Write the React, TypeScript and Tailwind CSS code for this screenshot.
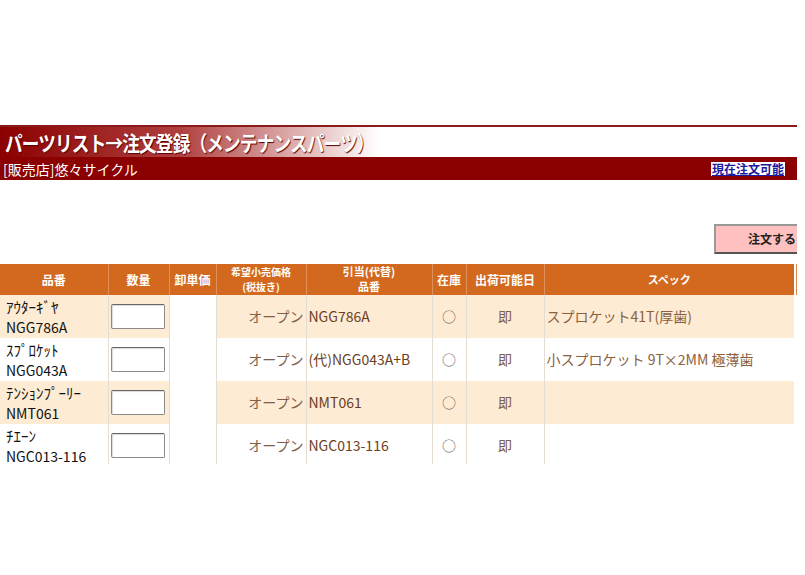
const font = "font-['Noto_Sans_CJK_JP','Noto_Sans',sans-serif]"

type Row = {
  name: string
  code: string
  price: string
  alloc: string
  stock: string
  ship: string
  spec: string
}

const rows: Row[] = [
  { name: "ｱｳﾀｰｷﾞﾔ", code: "NGG786A", price: "オープン", alloc: "NGG786A", stock: "○", ship: "即", spec: "スプロケット41T(厚歯)" },
  { name: "ｽﾌﾟﾛｹｯﾄ", code: "NGG043A", price: "オープン", alloc: "(代)NGG043A+B", stock: "○", ship: "即", spec: "小スプロケット 9T×2MM 極薄歯" },
  { name: "ﾃﾝｼｮﾝﾌﾟｰﾘｰ", code: "NMT061", price: "オープン", alloc: "NMT061", stock: "○", ship: "即", spec: "" },
  { name: "ﾁｴｰﾝ", code: "NGC013-116", price: "オープン", alloc: "NGC013-116", stock: "○", ship: "即", spec: "" },
]

export default function App() {
  return (
    <div className={`w-[805px] h-[575px] bg-white overflow-hidden ${font}`}>
      <div className="w-[797px] overflow-hidden pt-[125px]">
        {/* title */}
        <div className="border-t-2 border-[#8b1a1a] h-[32px] bg-[linear-gradient(to_right,#8b0000_0px,#b04040_180px,#ffffff_380px)] flex items-center pl-[5px]">
          <span className="text-white font-bold text-[21px] leading-none tracking-[-1px] scale-x-[0.84] origin-left whitespace-nowrap [text-shadow:1px_1px_1px_#5a0000]">
            パーツリスト→注文登録（メンテナンスパーツ）
          </span>
        </div>
        <div className="h-[23px] bg-[#8b0000] flex items-center justify-between pl-[3px] pr-[12px]">
          <span className="text-white text-[14px] leading-none">[販売店]悠々サイクル</span>
          <span className="bg-white text-[#1a1aa0] font-bold underline text-[12px] leading-none px-[1px] py-[1px]">現在注文可能</span>
        </div>

        {/* order button */}
        <div className="h-[84px] relative">
          <button className="absolute left-[714px] top-[44px] w-[110px] h-[30px] bg-[#ffc0c0] border-2 border-[#555] border-t-[#999] border-l-[#999] text-[12px] font-bold text-[#222] pl-[6px] text-center">
            注文する
          </button>
        </div>

        <div className="h-[200px] overflow-hidden">
          <table className="border-collapse table-fixed w-[805px]">
            <colgroup>
              <col className="w-[108px]" />
              <col className="w-[61px]" />
              <col className="w-[47px]" />
              <col className="w-[90px]" />
              <col className="w-[126px]" />
              <col className="w-[34px]" />
              <col className="w-[78px]" />
              <col className="w-[251px]" />
              <col className="w-[10px]" />
            </colgroup>
            <thead>
              <tr className="h-[31px] bg-[#d2691e] text-white text-[12px] font-bold">
                <th className="border-r border-[#e0915a] font-bold">品番</th>
                <th className="border-r border-[#e0915a] font-bold">数量</th>
                <th className="border-r border-[#e0915a] font-bold">卸単価</th>
                <th className="border-r border-[#e0915a] font-bold text-[10px] leading-[15px] align-top">希望小売価格<br />(税抜き)</th>
                <th className="border-r border-[#e0915a] font-bold text-[11px] leading-[15px] align-top">引当(代替)<br />品番</th>
                <th className="border-r border-[#e0915a] font-bold">在庫</th>
                <th className="border-r border-[#e0915a] font-bold">出荷可能日</th>
                <th className="border-r-2 border-white font-bold text-[11px]">スペック</th>
                <th className="bg-[#dd8a55]"></th>
              </tr>
            </thead>
            <tbody>
              {rows.map((r, i) => {
                const bg = i % 2 === 0 ? "bg-[#fdebd3]" : "bg-white"
                return (
                  <tr key={r.code} className="h-[43px]">
                    <td className={`${bg} border-r border-[#e6ddd2] pl-[6px] text-[14px] leading-[20px] text-[#111] whitespace-nowrap`}>
                      <span className="text-[15px]">{r.name}</span>
                      <br />
                      {r.code}
                    </td>
                    <td className={`${bg} border-r border-[#e6ddd2] pl-[2px]`}>
                      <input
                        type="text"
                        className="w-[54px] h-[25px] bg-white border border-[#8a8a8a] border-t-[#666] rounded-[2px] shadow-[inset_1px_1px_1px_rgba(0,0,0,0.15)]"
                      />
                    </td>
                    <td className="bg-white border-r border-[#e6ddd2]"></td>
                    <td className={`${bg} border-r border-[#e6ddd2] text-right pr-[2px] text-[14px] text-[#7d6048]`}>{r.price}</td>
                    <td className={`${bg} border-r border-[#e6ddd2] pl-[2px] text-[14px] text-[#6b3e22] whitespace-nowrap`}>{r.alloc}</td>
                    <td className={`${bg} border-r border-[#e6ddd2] text-center text-[14px] text-[#6f6258]`}>{r.stock}</td>
                    <td className={`${bg} border-r border-[#e6ddd2] text-center text-[14px] text-[#7d6048]`}>{r.ship}</td>
                    <td className={`${bg} border-r-2 border-white pl-[2px] text-[14px] text-[#8a6040] whitespace-nowrap`}>{r.spec}</td>
                    <td className="bg-white border-l border-[#eee]"></td>
                  </tr>
                )
              })}
            </tbody>
          </table>
        </div>
      </div>
    </div>
  )
}
